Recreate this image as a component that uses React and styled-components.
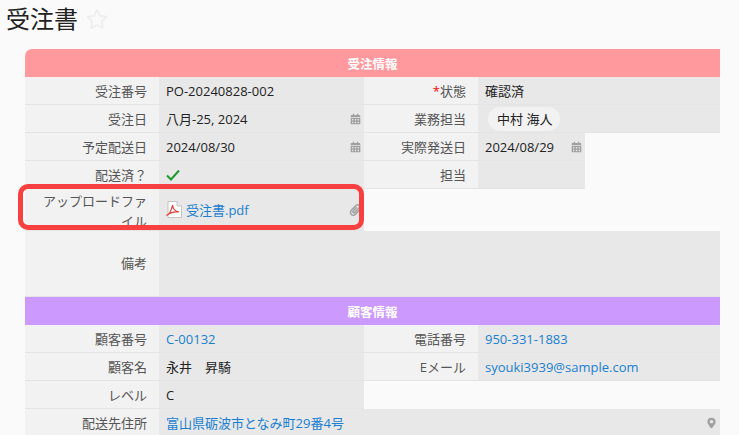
import React from "react";
import styled, { createGlobalStyle } from "styled-components";
import { FaCalendarAlt, FaMapMarkerAlt, FaPaperclip, FaRegStar } from "react-icons/fa";

const GlobalStyle = createGlobalStyle`
    html, body {
        margin: 0;
        background: #fafafa;
        overflow: hidden;
    }
    body {
        font-family: "Open Sans", "Noto Sans CJK JP", sans-serif;
        font-size: 13px;
        color: #222;
    }
`;

const Page = styled.div`
    position: relative;
    width: 739px;
    height: 435px;
    overflow: hidden;
`;

const TitleRow = styled.div`
    display: flex;
    align-items: center;
    gap: 8px;
    height: 37px;
    padding-left: 6px;
    margin-bottom: 12px;
`;

const Title = styled.h1`
    margin: 0;
    font-size: 24px;
    font-weight: 400;
    line-height: 37px;
    color: #222;
`;

const Star = styled(FaRegStar)`
    width: 22px;
    height: 22px;
    color: #eeeeee;
`;

const Form = styled.div`
    width: 695px;
    margin-left: 25px;
    display: grid;
    grid-template-columns: 134px 205px 114px 107px 135px;
`;

const SectionBar = styled.div`
    box-sizing: border-box;
    grid-column: 1 / -1;
    height: 28px;
    padding-top: 2px;
    line-height: 28px;
    text-align: center;
    color: #fff;
    font-weight: 700;
    font-size: 12.5px;
    background: ${(p) => p.$color};
    border-top-left-radius: ${(p) => (p.$rounded ? "7px" : "0")};
`;

const Label = styled.div`
    box-sizing: border-box;
    height: ${(p) => p.$height || 28}px;
    padding: ${(p) => (p.$wrap ? "2px" : "4px")} 12px 0 8px;
    line-height: 20px;
    text-align: right;
    color: #555;
    background: #f2f2f2;
    border-bottom: 1px solid #e4e4e4;
    overflow: hidden;
    ${(p) => p.$middle && "display: flex; align-items: center; justify-content: flex-end; padding: 0 12px 2px 8px;"}
`;

const Value = styled.div`
    box-sizing: border-box;
    position: relative;
    grid-column: span ${(p) => p.$span || 1};
    display: flex;
    align-items: center;
    height: ${(p) => p.$height || 28}px;
    padding: 0 7px;
    background: #e8e8e8;
    border-bottom: 1px solid #e4e4e4;
    color: #222;
`;

const Blank = styled.div`
    grid-column: span ${(p) => p.$span || 1};
`;

const Link = styled.a`
    color: #1a7fcf;
    text-decoration: none;
`;

const Required = styled.span`
    color: #f00;
`;

const Chip = styled.span`
    display: inline-block;
    height: 24px;
    line-height: 24px;
    padding: 0 8px 0 9px;
    margin-left: 3px;
    border-radius: 12px;
    background: #f2f2f2;
`;

const SideIcon = styled.span`
    position: absolute;
    right: 3px;
    top: 50%;
    transform: translateY(-50%);
    display: flex;
    color: #a0a0a0;
    svg {
        width: ${(p) => p.$size || 11}px;
        height: ${(p) => p.$size || 11}px;
    }
`;

const FileLink = styled(Link)`
    display: flex;
    align-items: center;
    gap: 4px;
`;

const Highlight = styled.div`
    position: absolute;
    left: 18px;
    top: 184px;
    width: 346px;
    height: 46px;
    box-sizing: border-box;
    border: 5px solid #f94040;
    border-radius: 10px;
    pointer-events: none;
`;

const CheckIcon = () => (
    <svg width="14" height="12" viewBox="0 0 14 12">
        <path d="M1 6.5L5 10.5L13 1.5" fill="none" stroke="#1f9a2e" strokeWidth="2" />
    </svg>
);

const PdfIcon = () => (
    <svg width="16" height="17" viewBox="0 0 16 17">
        <path d="M2 .5H11L15.5 5V16.5H2Z" fill="#fdfdfd" stroke="#c4c4c4" />
        <path d="M11 .5V5H15.5" fill="#eaeaea" stroke="#c4c4c4" />
        <path
            d="M.5 14.5C3 13.5 5.5 9 6.5 4C7 8 9.5 10.5 13 11C9.5 10.5 4 11.5 .5 14.5Z"
            fill="none"
            stroke="#dc3d30"
            strokeWidth="1.2"
        />
    </svg>
);

const Calendar = () => (
    <SideIcon>
        <FaCalendarAlt />
    </SideIcon>
);

export default function App() {
    return (
        <Page>
            <GlobalStyle />
            <TitleRow>
                <Title>受注書</Title>
                <Star />
            </TitleRow>
            <Form>
                <SectionBar $color="#ff999e" $rounded>受注情報</SectionBar>

                <Label>受注番号</Label>
                <Value>PO-20240828-002</Value>
                <Label><Required>*</Required>状態</Label>
                <Value $span={2}>確認済</Value>

                <Label>受注日</Label>
                <Value>八月-25, 2024<Calendar /></Value>
                <Label>業務担当</Label>
                <Value $span={2}><Chip>中村 海人</Chip></Value>

                <Label>予定配送日</Label>
                <Value>2024/08/30<Calendar /></Value>
                <Label>実際発送日</Label>
                <Value>2024/08/29<Calendar /></Value>
                <Blank />

                <Label>配送済？</Label>
                <Value><CheckIcon /></Value>
                <Label>担当</Label>
                <Value />
                <Blank />

                <Label $height={42} $wrap>アップロードファイル</Label>
                <Value $height={42}>
                    <FileLink href="#"><PdfIcon />受注書.pdf</FileLink>
                    <SideIcon $size={12}><FaPaperclip /></SideIcon>
                </Value>
                <Blank $span={3} />

                <Label $height={66} $middle>備考</Label>
                <Value $span={4} $height={66} />

                <SectionBar $color="#cc99ff">顧客情報</SectionBar>

                <Label>顧客番号</Label>
                <Value><Link href="#">C-00132</Link></Value>
                <Label>電話番号</Label>
                <Value $span={2}><Link href="#">950-331-1883</Link></Value>

                <Label>顧客名</Label>
                <Value>永井　昇騎</Value>
                <Label>Eメール</Label>
                <Value $span={2}><Link href="#">syouki3939@sample.com</Link></Value>

                <Label>レベル</Label>
                <Value>C</Value>
                <Blank $span={3} />

                <Label>配送先住所</Label>
                <Value $span={4}>
                    <Link href="#">富山県砺波市となみ町29番4号</Link>
                    <SideIcon><FaMapMarkerAlt /></SideIcon>
                </Value>
            </Form>
            <Highlight />
        </Page>
    );
}
